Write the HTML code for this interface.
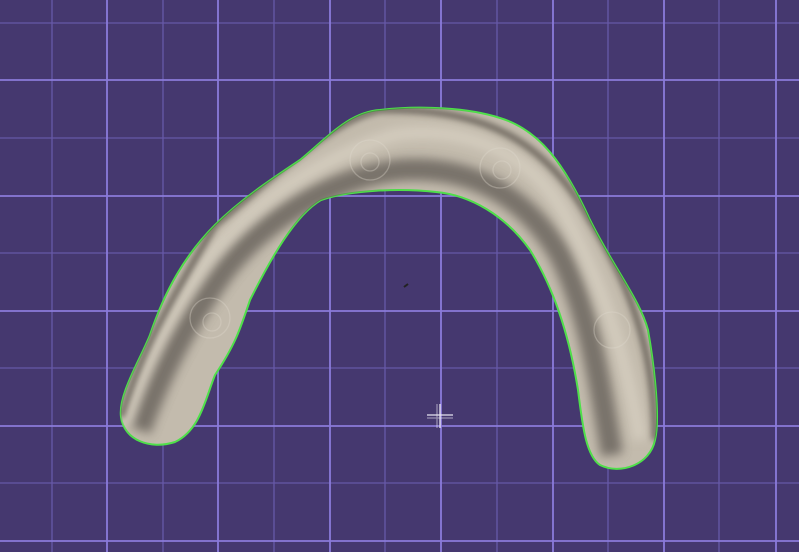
<!DOCTYPE html>
<html><head><meta charset="utf-8"><style>html,body{margin:0;padding:0;background:#45386f;}svg{display:block}</style></head>
<body>
<svg width="799" height="552" viewBox="0 0 799 552" xmlns="http://www.w3.org/2000/svg">
<defs>
<clipPath id="c"><path id="arch" d="M121,417 C118,395 140,360 150,335 C165,290 185,255 215,225 C240,200 270,180 300,160 C330,135 350,112 380,110 C420,105 470,108 500,118 C540,130 565,165 590,220 C615,270 640,300 648,330 C655,370 660,420 655,440 C650,465 620,475 600,465 C585,455 582,420 578,390 C570,340 555,290 530,250 C505,215 470,195 436,192 C400,188 350,190 321,200 C295,215 270,260 250,300 C240,330 235,345 215,375 C205,400 200,430 175,442 C150,450 124,440 121,417 Z"/></clipPath>
<filter id="b" x="-20%" y="-20%" width="140%" height="140%"><feGaussianBlur stdDeviation="5"/></filter>
<filter id="b2" x="-20%" y="-20%" width="140%" height="140%"><feGaussianBlur stdDeviation="3"/></filter>
</defs>
<rect width="799" height="552" fill="#45386f"/>
<g stroke="#6659a8" stroke-width="1.3">
<path d="M52,0V552M163,0V552M274,0V552M385,0V552M497,0V552M608,0V552M719,0V552M0,23H799M0,138H799M0,253H799M0,368H799M0,483H799"/>
</g>
<g stroke="#8a7bda" stroke-width="1.8">
<path d="M107,0V552M218,0V552M330,0V552M441,0V552M553,0V552M664,0V552M776,0V552M0,80H799M0,196H799M0,311H799M0,426H799M0,541H799"/>
</g>
<use href="#arch" fill="#c3bbad" stroke="#4fe04a" stroke-width="2"/>
<g clip-path="url(#c)">
<path d="M140,430 C160,375 185,325 225,270 C265,220 330,178 400,170 C470,165 525,195 560,255 C590,315 600,385 612,455" fill="none" stroke="#66605a" stroke-width="22" opacity="0.8" filter="url(#b)"/>
<path d="M125,425 C140,370 165,320 200,270 C240,215 310,160 395,135 C460,125 530,150 565,215 C600,280 625,350 640,440" fill="none" stroke="#ddd6c8" stroke-width="14" opacity="0.6" filter="url(#b)"/>
<path d="M121,417 C140,360 150,335 215,225 C270,180 330,120 380,110 C470,108 540,130 590,220 C640,300 655,370 655,440" fill="none" stroke="#4f4a42" stroke-width="7" opacity="0.65" filter="url(#b2)"/>
<g fill="none" stroke="#e0dace" stroke-width="1.3" opacity="0.35">
<circle cx="370" cy="160" r="20"/><circle cx="370" cy="162" r="9"/>
<circle cx="500" cy="168" r="20"/><circle cx="502" cy="170" r="9"/>
<circle cx="210" cy="318" r="20"/><circle cx="212" cy="322" r="9"/>
<circle cx="612" cy="330" r="18"/>
</g>
</g>
<path d="M404,287 l4,-3" stroke="#222" stroke-width="2"/>
<g stroke="#e8e4f0" stroke-width="1.3"><path d="M427,415H453M440,404V428"/><path d="M427,418H453M437,404V428" opacity="0.5"/></g>
</svg>
</body></html>
